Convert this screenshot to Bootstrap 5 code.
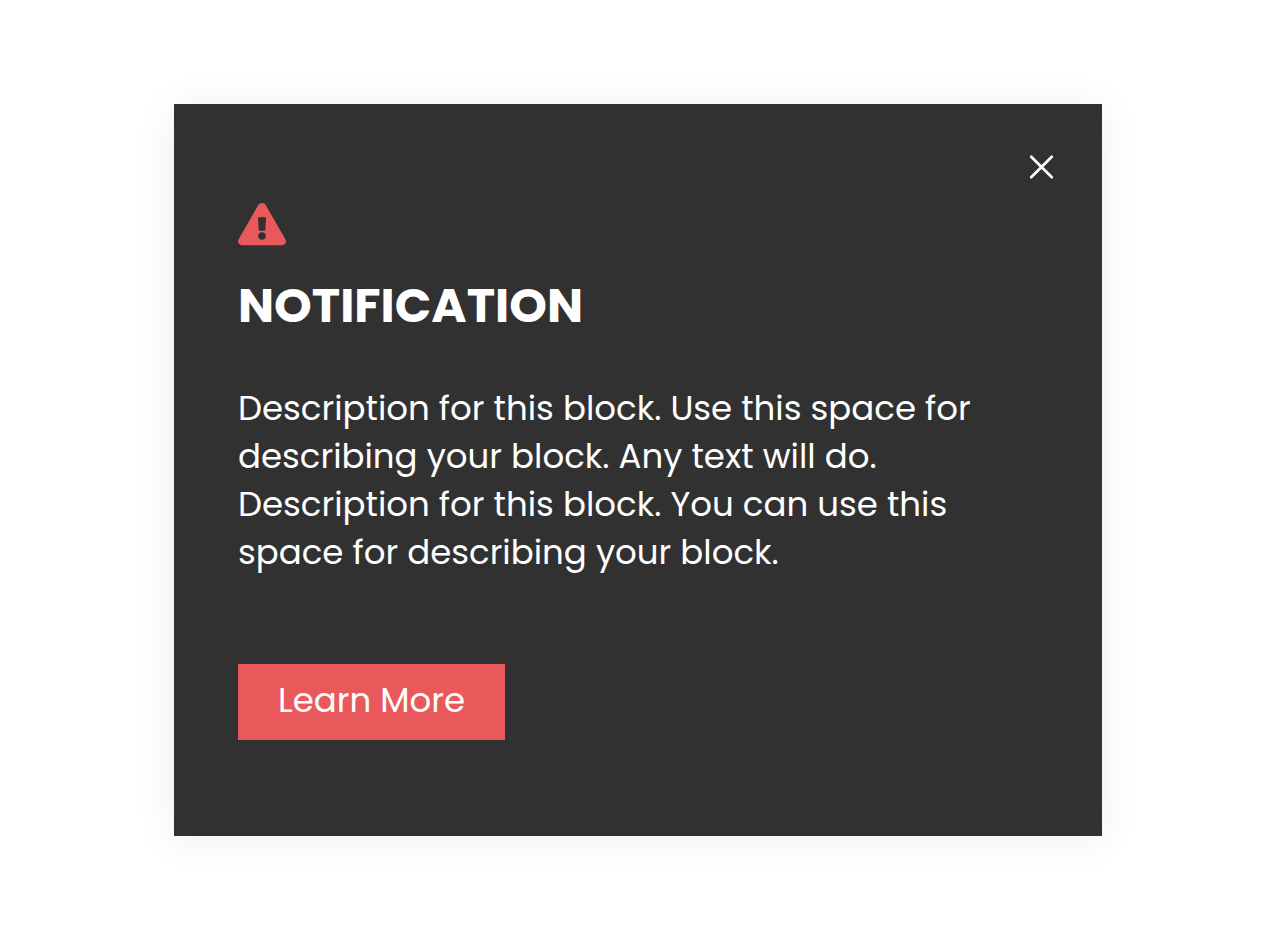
<!DOCTYPE html>
<html lang="en">
<head>
<meta charset="utf-8">
<meta name="viewport" content="width=device-width, initial-scale=1">
<title>Notification</title>
<link href="https://cdn.jsdelivr.net/npm/bootstrap@5.3.0/dist/css/bootstrap.min.css" rel="stylesheet">
<style>
body{background:#fff;font-family:Poppins,Lato,"Open Sans",sans-serif}
.stage{padding:104px 34px 104px 24px}
.notice{max-width:928px;background:#313131;color:#fff;padding:48px 48px 96px 64px;box-shadow:0 4px 40px rgba(0,0,0,.07)}
.notice-close{width:26px;height:30px;line-height:0}
.notice-icon{width:48px;height:44px;margin-top:20px}
.notice-title{font-size:48px;line-height:60px;margin:30px 0 48px}
.notice-text{font-size:34px;line-height:48px;margin-bottom:88px;max-width:752px}
.notice-action,.notice-action:hover{background:#e9595c;color:#fff}
.notice-action{font-size:34px;line-height:48px;padding:12px 40px 16px}
</style>
</head>
<body>
<main class="stage">
<section class="notice mx-auto" aria-labelledby="notice-title">
<div class="d-flex justify-content-end">
<button type="button" class="notice-close btn p-0 border-0 rounded-0" aria-label="Close"><svg width="26" height="30" viewBox="0 0 26 30" fill="none" stroke="#fff" stroke-width="2.7" stroke-linecap="round" aria-hidden="true"><path d="M3.2 4.7L23.8 25.3M23.8 4.7L3.2 25.3"/></svg></button>
</div>
<svg class="notice-icon d-block" viewBox="0 0 48 44" aria-hidden="true">
<path fill="#e9595c" fill-rule="evenodd" d="M20.2 3.2C21.8.3 26.2.3 27.8 3.2L47.4 37.2C49 40 47.2 43.2 44 43.2H4C.8 43.2-1 40 .6 37.2ZM20.8 15.2Q20 15.2 20 16.1L20.7 27.8Q20.8 28.7 21.6 28.7H26.4Q27.2 28.7 27.3 27.8L28 16.1Q28 15.2 27.2 15.2ZM24 30.2A3.8 3.8 0 1 0 24 37.8A3.8 3.8 0 1 0 24 30.2Z"/>
</svg>
<h1 class="notice-title fw-bold" id="notice-title">NOTIFICATION</h1>
<p class="notice-text">Description for this block. Use this space for describing your block. Any text will do. Description for this block. You can use this space for describing your block.</p>
<button type="button" class="notice-action btn border-0 rounded-0">Learn More</button>
</section>
</main>
<script src="https://cdn.jsdelivr.net/npm/bootstrap@5.3.0/dist/js/bootstrap.bundle.min.js"></script>
</body>
</html>
